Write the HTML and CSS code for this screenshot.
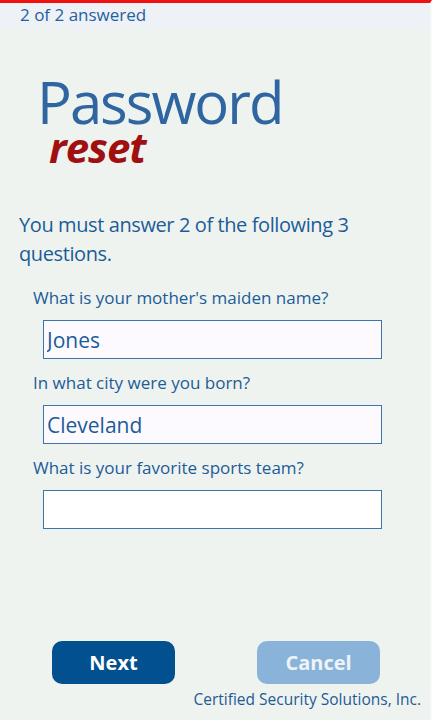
FILE: index.html
```html
<!DOCTYPE html>
<html lang="en">
<head>
  <meta charset="UTF-8">
  <title>Password reset</title>
  <link rel="stylesheet" href="styles.css">
</head>
<body>
  <div id="page">
    <div id="status-bar">2 of 2 answered</div>
    <div id="content">
      <div id="logo">
        <div id="logo-title">Password</div>
        <div id="logo-sub">reset</div>
      </div>
      <p id="intro">You must answer 2 of the following 3 questions.</p>
      <div class="question">
        <label for="q1">What is your mother's maiden name?</label>
        <input type="text" id="q1" value="Jones">
      </div>
      <div class="question">
        <label for="q2">In what city were you born?</label>
        <input type="text" id="q2" value="Cleveland">
      </div>
      <div class="question">
        <label for="q3">What is your favorite sports team?</label>
        <input type="text" id="q3" class="empty">
      </div>
    </div>
    <div id="footer">
      <div id="buttons">
        <button id="next-button">Next</button>
        <button id="cancel-button">Cancel</button>
      </div>
      <div id="company">Certified Security Solutions, Inc.</div>
    </div>
  </div>
</body>
</html>
```

FILE: styles.css
```css
html, body {
  margin: 0;
  padding: 0;
  width: 432px;
  height: 720px;
  font-family: "Open Sans", "Noto Sans", sans-serif;
  background: #eff3ef;
  color: #1b5c98;
}
#page {
  height: 720px;
  box-sizing: border-box;
  border-top: 3px solid #f01010;
  border-right: 2px solid #f7f8f8;
  display: flex;
  flex-direction: column;
}
#status-bar {
  height: 26px;
  box-sizing: border-box;
  padding: 0 0 0 20px;
  background: #eef1f6;
  font-size: 17px;
  line-height: 23px;
  color: #1e62a0;
}
#content {
  flex: 1;
  display: flex;
  flex-direction: column;
  padding: 0 0 0 19px;
}
#logo {
  margin: 48px 0 0 18px;
}
#logo-title {
  font-size: 58px;
  line-height: 50px;
  color: #2f65a0;
  letter-spacing: -2px;
}
#logo-sub {
  margin: 0 0 0 12px;
  font-size: 42px;
  line-height: 40px;
  font-weight: bold;
  font-style: italic;
  color: #a01010;
  letter-spacing: -1px;
}
#intro {
  margin: 43px 0 6px 0;
  width: 390px;
  font-size: 20px;
  line-height: 29px;
  letter-spacing: -0.4px;
}
.question {
  margin: 13px 0 0 14px;
}
.question label {
  display: block;
  font-size: 17px;
  line-height: 22px;
}
.question input {
  display: block;
  margin: 11px 0 0 10px;
  width: 339px;
  height: 39px;
  box-sizing: border-box;
  padding: 0 3px;
  border: 1px solid #3b76aa;
  border-radius: 0;
  background: #fdfaff;
  font-family: "Open Sans", "Noto Sans", sans-serif;
  font-size: 21px;
  color: #1b5c98;
  outline: none;
}
.question input.empty {
  background: #ffffff;
}
#footer {
  padding: 0 9px 11px 0;
}
#buttons {
  display: flex;
  gap: 82px;
  padding-left: 52px;
}
#buttons button {
  width: 123px;
  height: 43px;
  border: none;
  border-radius: 10px;
  font-family: "Open Sans", "Noto Sans", sans-serif;
  font-size: 20px;
  font-weight: bold;
}
#next-button {
  background: #02508f;
  color: #ffffff;
}
#cancel-button {
  background: #89b3d9;
  color: #eef3f8;
}
#company {
  margin-top: 5px;
  text-align: right;
  font-size: 15.5px;
  line-height: 20px;
  color: #1e5a96;
}
```
